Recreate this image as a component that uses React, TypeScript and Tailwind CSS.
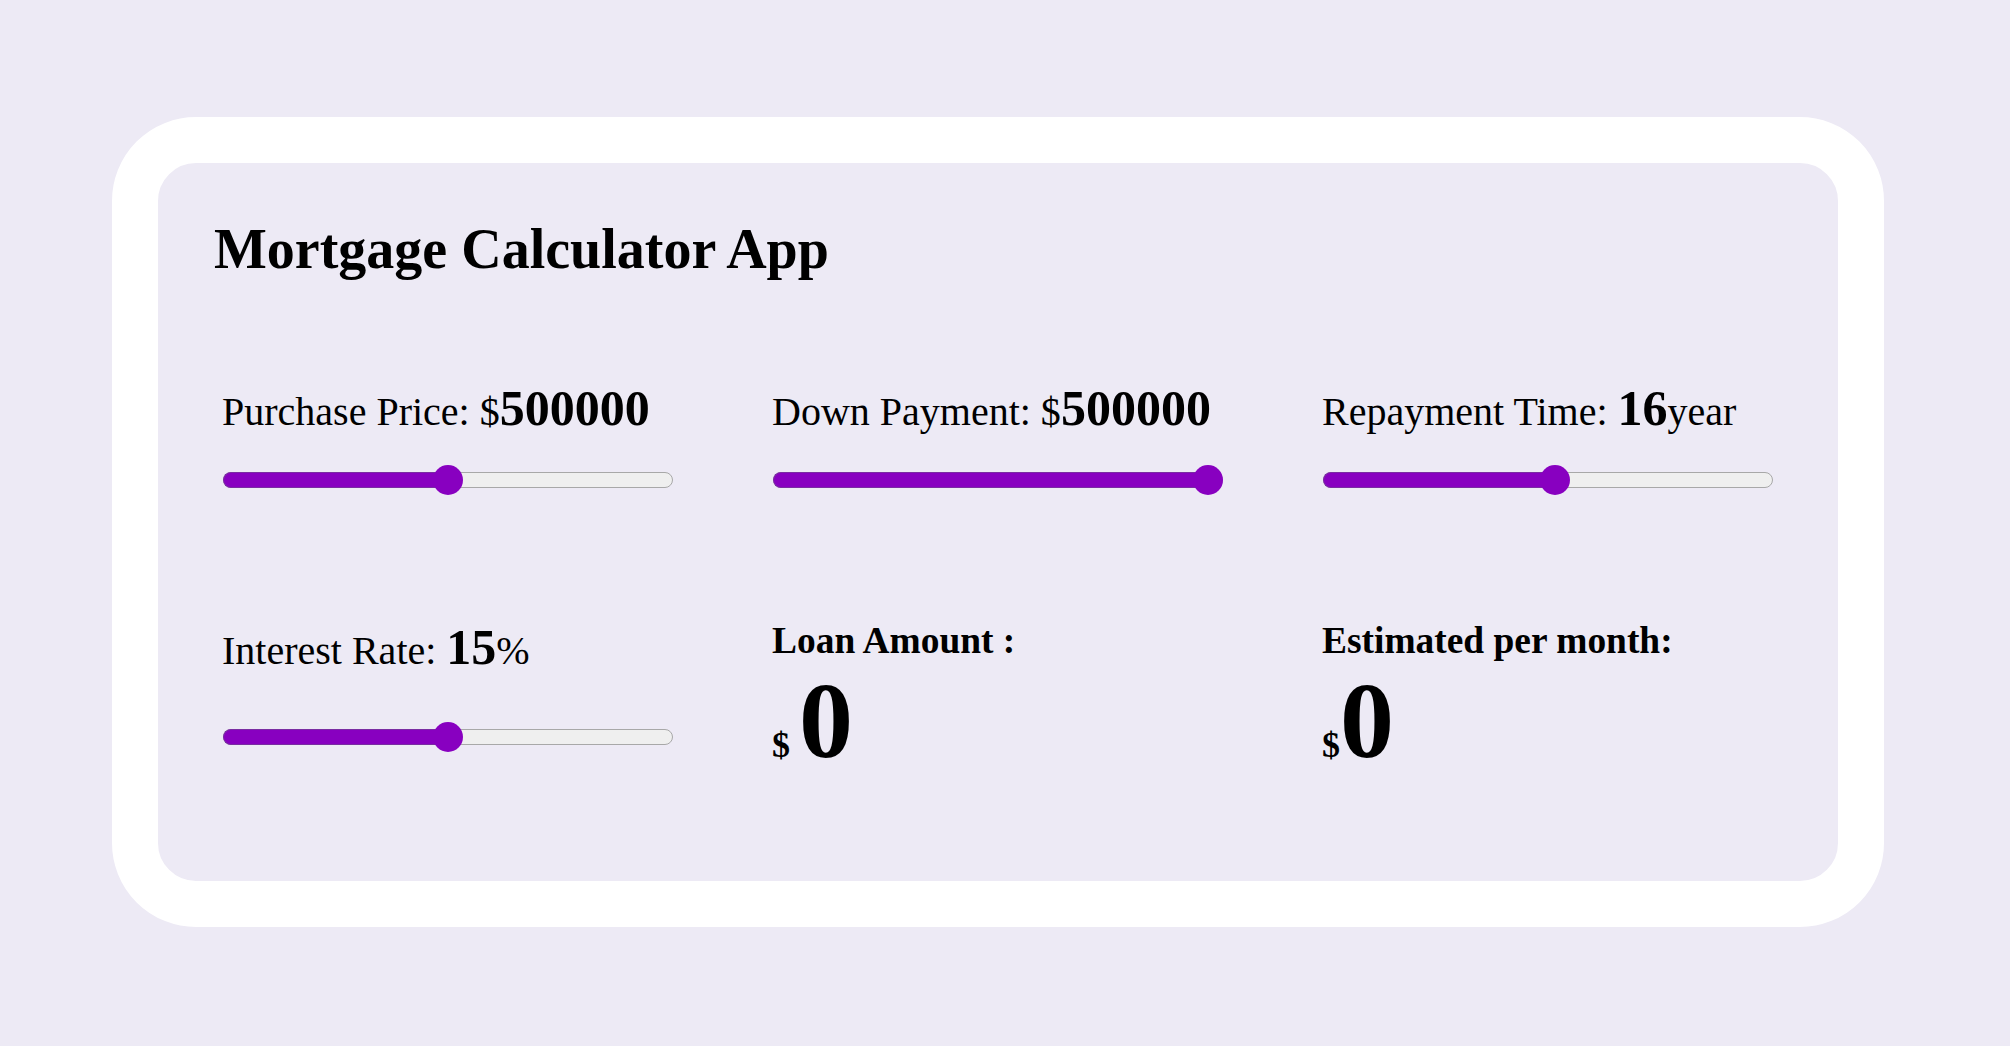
import React from "react";

type SliderProps = {
  value: number;
  min: number;
  max: number;
};

function Slider({ value, min, max }: SliderProps) {
  const ratio = (value - min) / (max - min);
  const center = 15 + ratio * 420;
  return (
    <div className="relative ml-px flex h-[30px] w-[450px] items-center">
      <div className="relative h-4 w-full">
        <div className="absolute inset-0 rounded-full border border-[#a8a8a8] bg-[#efefef]" />
        <div
          className="absolute left-0 top-0 h-full rounded-l-full border border-r-0 border-[#7a2ca2] bg-[#8800c0]"
          style={{ width: center }}
        />
      </div>
      <div
        className="absolute top-0 size-[30px] rounded-full bg-[#8800c0]"
        style={{ left: center - 15 }}
      />
    </div>
  );
}

function Label({ text, value, unit }: { text: string; value: string; unit?: string }) {
  return (
    <div className="text-[40px] leading-none whitespace-nowrap">
      {text}
      <span className="text-[50px] font-bold">{value}</span>
      {unit}
    </div>
  );
}

export default function App() {
  const purchase = 500000;
  const down = 500000;
  const years = 16;
  const rate = 15;

  return (
    <div className="min-h-screen bg-[#edeaf5] pt-[117px] font-['Liberation_Serif',serif] text-black">
      <div className="ml-[112px] h-[810px] w-[1772px] rounded-[84px] border-[46px] border-white bg-[#edeaf5]">
        <h1 className="pl-[56px] pt-[58px] text-[56px] font-bold leading-none">
          Mortgage Calculator App
        </h1>

        <div className="mt-[106px] grid grid-cols-[550px_550px_550px] pl-[64px]">
          <div>
            <Label text="Purchase Price: $" value={String(purchase)} />
            <div className="mt-[32px]">
              <Slider value={purchase} min={0} max={1000000} />
            </div>
          </div>
          <div>
            <Label text="Down Payment: $" value={String(down)} />
            <div className="mt-[32px]">
              <Slider value={down} min={0} max={500000} />
            </div>
          </div>
          <div>
            <Label text="Repayment Time: " value={String(years)} unit="year" />
            <div className="mt-[32px]">
              <Slider value={years} min={1} max={30} />
            </div>
          </div>
        </div>

        <div className="mt-[127px] grid grid-cols-[550px_550px_550px] pl-[64px]">
          <div>
            <Label text="Interest Rate: " value={String(rate)} unit="%" />
            <div className="mt-[50px]">
              <Slider value={rate} min={0} max={30} />
            </div>
          </div>
          <div>
            <div className="text-[37.44px] font-bold leading-none">Loan Amount :</div>
            <div className="mt-[8px] font-bold leading-none">
              <span className="text-[36px]">$ </span>
              <span className="text-[108px]">0</span>
            </div>
          </div>
          <div>
            <div className="text-[37.44px] font-bold leading-none">Estimated per month:</div>
            <div className="mt-[8px] font-bold leading-none">
              <span className="text-[36px]">$</span>
              <span className="text-[108px]">0</span>
            </div>
          </div>
        </div>
      </div>
    </div>
  );
}
